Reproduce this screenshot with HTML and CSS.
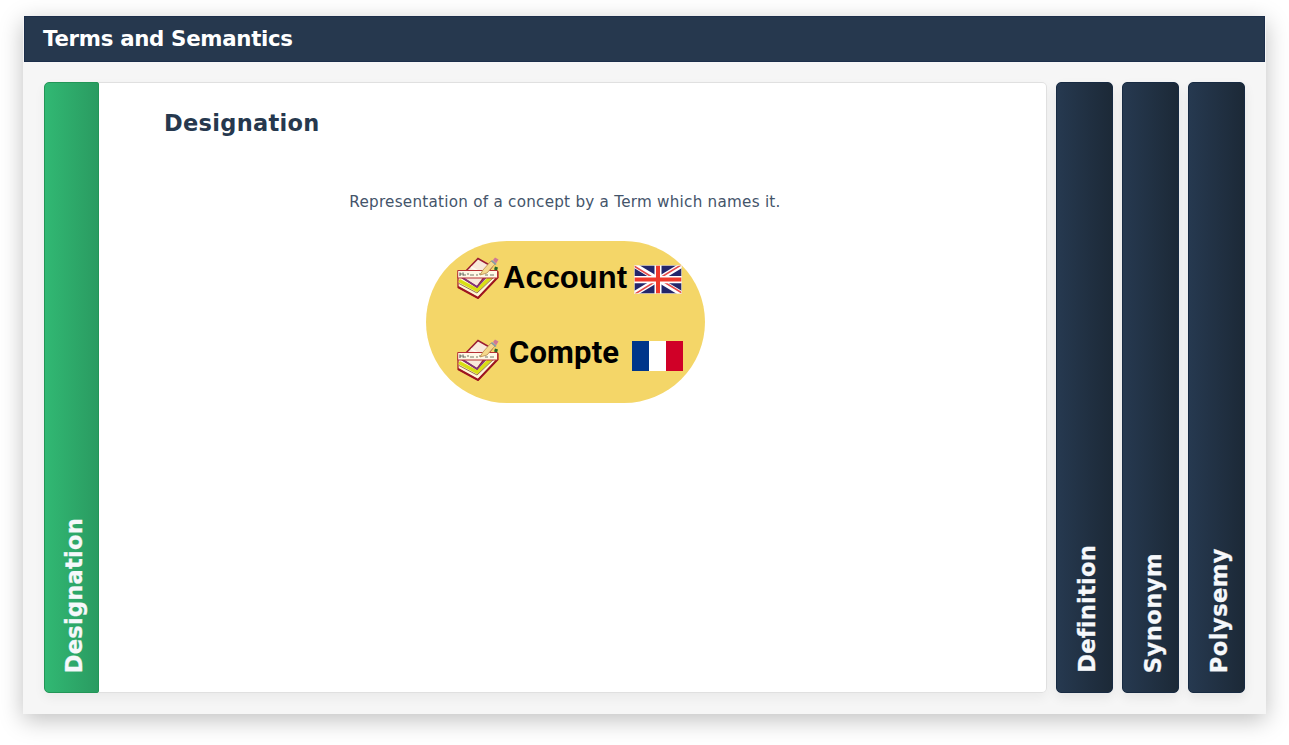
FILE: index.html
```html
<!DOCTYPE html>
<html lang="en">
<head>
<meta charset="utf-8">
<title>Terms and Semantics</title>
<link rel="stylesheet" href="styles.css">
</head>
<body>
<svg width="0" height="0" class="defs" aria-hidden="true">
  <symbol id="book" viewBox="0 0 42 42">
    <path d="M1 17v13l20 11 20-21V15z" fill="#fff6d6" stroke="#a92226" stroke-width="1.3"/>
    <path d="M2 23.500l18 9.500 17-16" fill="none" stroke="#d9df13" stroke-width="3.600"/>
    <path d="M2 26.500l18 9.500 18-17" fill="none" stroke="#81502c" stroke-width=".8"/>
    <path d="M1 30l20 11 20-21" fill="none" stroke="#9d1520" stroke-width="2"/>
    <path d="M6 17L21 1.500l14 8L20 30 4 20z" fill="#f9e9db" stroke="#9b1d33" stroke-width="1.600"/>
    <path d="M6 21l14 9 14-15" fill="none" stroke="#80347a" stroke-width="1.500"/>
    <path d="M14 10l14 8" stroke="#fffaf0" stroke-width="1.500"/>
    <path d="M.700 13.500h39.800v7.500H.7z" fill="#fff8e6" stroke="#b63033" stroke-width="1"/>
    <path d="M3 17h2m1 1h3m1-1h2m1 1h4m2 0h2m1-1h3m3 1h3m2 0h4" stroke="#747866" stroke-width="1"/>
    <path d="M3 15.500v3.500M6 15.500v3" stroke="#46504a"/>
    <path d="M23 18l3-5 8-9 4 3-8 9z" fill="#f5d98b" stroke="#b98b50" stroke-width=".8"/>
    <path d="M36 3l2-2.500 3.500 2-2.500 4z" fill="#ce7896"/>
    <path d="M34.500 3.500l4.500 4" stroke="#7d9caf" stroke-width="1.600"/>
    <path d="M38 9.500l3 1-1 3-3-1z" fill="#25642a"/>
  </symbol>
</svg>
<main class="window">
  <header class="titlebar"><h1 class="title">Terms and Semantics</h1></header>
  <div class="accordion">
    <section class="slide">
      <div class="tab tab-active"><span class="tab-label">Designation</span></div>
      <div class="content">
        <h2 class="heading">Designation</h2>
        <p class="description">Representation of a concept by a Term which names it.</p>
        <div class="concept">
          <div class="term term-en">
            <svg class="book"><use href="#book"/></svg>
            <span class="word word-en">Account</span>
            <svg class="flag-uk" viewBox="0 0 48 28" preserveAspectRatio="none">
              <path fill="#23266b" d="M0 0h48v28H0z"/>
              <path d="M0 0l48 28M48 0L0 28" stroke="#fff" stroke-width="5"/>
              <path d="M0 1l22 13M48 27L26 14M47 0L25 13M1 28l22-13" stroke="#e44b4b" stroke-width="1.5"/>
              <path d="M24 0v28M0 14h48" stroke="#fff" stroke-width="7"/>
              <path d="M24 0v28M0 14h48" stroke="#f0392b" stroke-width="4"/>
              <path d="M.4.4h47.2v27.2H.4z" fill="none" stroke="#f3e6c5" stroke-width=".8"/>
            </svg>
          </div>
          <div class="term term-fr">
            <svg class="book"><use href="#book"/></svg>
            <span class="word word-fr">Compte</span>
            <div class="flag-fr"></div>
          </div>
        </div>
      </div>
    </section>
    <div class="tab"><span class="tab-label">Definition</span></div>
    <div class="tab"><span class="tab-label label-wide">Synonym</span></div>
    <div class="tab"><span class="tab-label label-wide">Polysemy</span></div>
  </div>
</main>
</body>
</html>
```
FILE: styles.css
```css
* { box-sizing: border-box; }
body {
  margin: 0;
  padding: 16px 23px 31px;
  height: 745px;
  overflow: hidden;
  background: #fff;
  font-family: "DejaVu Sans", Verdana, sans-serif;
}
.defs { display: block; }
.window {
  height: 698px;
  background: #f6f6f6;
  box-shadow: 0 6px 22px rgba(0, 0, 0, .25);
}
.titlebar {
  height: 46px;
  margin: 0 1px;
  padding: 0 0 2px 18px;
  background: #26384e;
  border: 1px solid #1c2e4a;
  display: flex;
  align-items: center;
}
.title {
  margin: 0;
  font-size: 21.3px;
  letter-spacing: -.3px;
  color: #fff;
  white-space: nowrap;
}
.accordion {
  display: flex;
  gap: 9px;
  height: 631px;
  padding: 20px 21px 0 21px;
}
.slide {
  display: flex;
  flex: 1;
  height: 611px;
  border-radius: 5px;
  background: #fff;
  box-shadow: inset 0 0 0 1px #e0e0e0, 0 5px 12px rgba(0, 0, 0, .05);
}
.tab {
  width: 57px;
  height: 611px;
  flex: none;
  border: 1px solid #172a42;
  border-radius: 5px;
  background: linear-gradient(90deg, #263950, #1c2937);
  box-shadow: 0 5px 12px rgba(0, 0, 0, .07);
  display: flex;
  justify-content: center;
  align-items: flex-end;
  padding: 0 0 19px 4px;
}
.tab-active {
  width: 55px;
  padding-left: 5px;
  border-color: #229657;
  border-radius: 5px 2px 2px 5px;
  background: linear-gradient(90deg, #31b873, #2a9b61);
  box-shadow: none;
}
.tab-label {
  writing-mode: vertical-rl;
  transform: rotate(180deg);
  font-size: 22.6px;
  letter-spacing: .2px;
  line-height: 36px;
  font-weight: bold;
  -webkit-text-stroke: .3px #f6f8fb;
  color: #f6f8fb;
  white-space: nowrap;
}
.label-wide { letter-spacing: .45px; }
.content {
  flex: 1;
  padding: 26px 80px 0 65px;
  display: flex;
  flex-direction: column;
}
.heading {
  margin: 0;
  font-size: 22.5px;
  letter-spacing: .3px;
  line-height: 30px;
  color: #26384e;
}
.description {
  margin: 54px 0 0;
  width: 802px;
  text-align: center;
  font-size: 15.2px;
  letter-spacing: .245px;
  line-height: 20px;
  color: #44546a;
  white-space: nowrap;
}
.concept {
  width: 279px;
  height: 162px;
  margin: 29px 0 0 262px;
  border-radius: 81px;
  background: #f4d668;
  padding: 16px 0 0 31px;
}
.term { display: flex; height: 82px; color: #000; }
.book { width: 42px; height: 42px; flex: none; }
.word { white-space: nowrap; font-weight: bold; line-height: 40px; }
.word-en {
  width: 131px;
  margin: 1px 0 0 4px;
  font-family: "Liberation Sans", Arial, sans-serif;
  font-size: 31px;
}
.word-fr {
  width: 123px;
  margin: -6px 0 0 10px;
  font-family: Roboto, sans-serif;
  font-size: 31px;
  letter-spacing: .15px;
}
.flag-uk { width: 48px; height: 29px; margin-top: 8px; }
.flag-fr {
  width: 51px;
  height: 30px;
  margin-top: 2px;
  background: linear-gradient(90deg, #00358a 33.3%, #fff 33.3% 66.6%, #d00027 66.6%);
}
```
